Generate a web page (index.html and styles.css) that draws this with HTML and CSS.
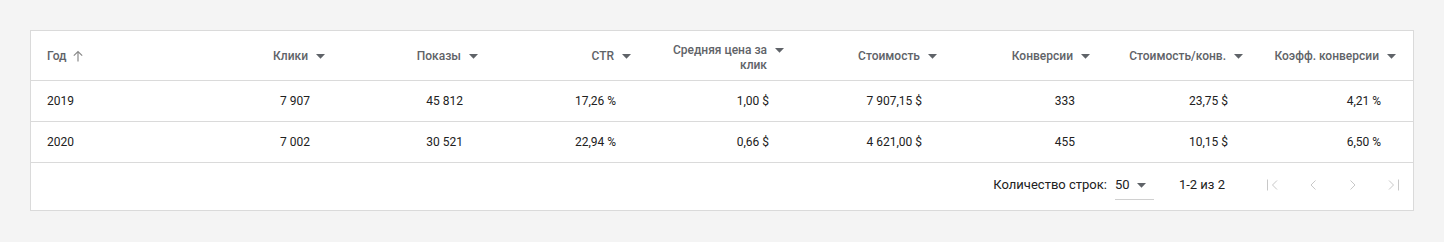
FILE: index.html
```html
<!DOCTYPE html>
<html lang="ru">
<head>
<meta charset="utf-8">
<link rel="stylesheet" href="styles.css">
</head>
<body>
<div class="card">
  <div class="grid">
    <div class="hcell first"><span class="htext">Год</span><svg class="up" width="12" height="12" viewBox="0 0 12 12"><path d="M6 11.5V1.5M1.8 5.7L6 1.5l4.2 4.2" fill="none" stroke="currentColor" stroke-width="1.2"/></svg></div>
    <div class="hcell"><span class="htext">Клики</span><svg class="dd" width="9" height="5" viewBox="0 0 9 5"><path d="M0 0h9L4.5 4.7z" fill="currentColor"/></svg></div>
    <div class="hcell"><span class="htext">Показы</span><svg class="dd" width="9" height="5" viewBox="0 0 9 5"><path d="M0 0h9L4.5 4.7z" fill="currentColor"/></svg></div>
    <div class="hcell"><span class="htext">CTR</span><svg class="dd" width="9" height="5" viewBox="0 0 9 5"><path d="M0 0h9L4.5 4.7z" fill="currentColor"/></svg></div>
    <div class="hcell two"><span class="htext">Средняя цена за клик</span><svg class="dd" width="9" height="5" viewBox="0 0 9 5"><path d="M0 0h9L4.5 4.7z" fill="currentColor"/></svg></div>
    <div class="hcell"><span class="htext">Стоимость</span><svg class="dd" width="9" height="5" viewBox="0 0 9 5"><path d="M0 0h9L4.5 4.7z" fill="currentColor"/></svg></div>
    <div class="hcell"><span class="htext">Конверсии</span><svg class="dd" width="9" height="5" viewBox="0 0 9 5"><path d="M0 0h9L4.5 4.7z" fill="currentColor"/></svg></div>
    <div class="hcell"><span class="htext">Стоимость/конв.</span><svg class="dd" width="9" height="5" viewBox="0 0 9 5"><path d="M0 0h9L4.5 4.7z" fill="currentColor"/></svg></div>
    <div class="hcell"><span class="htext">Коэфф. конверсии</span><svg class="dd" width="9" height="5" viewBox="0 0 9 5"><path d="M0 0h9L4.5 4.7z" fill="currentColor"/></svg></div>

    <div class="cell first">2019</div>
    <div class="cell">7 907</div>
    <div class="cell">45 812</div>
    <div class="cell">17,26 %</div>
    <div class="cell">1,00 $</div>
    <div class="cell">7 907,15 $</div>
    <div class="cell">333</div>
    <div class="cell">23,75 $</div>
    <div class="cell">4,21 %</div>

    <div class="cell first">2020</div>
    <div class="cell">7 002</div>
    <div class="cell">30 521</div>
    <div class="cell">22,94 %</div>
    <div class="cell">0,66 $</div>
    <div class="cell">4 621,00 $</div>
    <div class="cell">455</div>
    <div class="cell">10,15 $</div>
    <div class="cell">6,50 %</div>
  </div>
  <div class="paginator">
    <span class="label">Количество строк:</span>
    <div class="select"><span>50</span><svg class="dd" width="9" height="5" viewBox="0 0 9 5"><path d="M0 0h9L4.5 4.7z" fill="currentColor"/></svg></div>
    <span class="range">1-2 из 2</span>
    <div class="navs">
      <span class="nav"><svg width="14" height="14" viewBox="0 0 14 14"><path d="M1.5 1.5v11M11 2.5L6.5 7l4.5 4.5" fill="none" stroke="currentColor" stroke-width="1"/></svg></span>
      <span class="nav"><svg width="14" height="14" viewBox="0 0 14 14"><path d="M9.5 2.5L5 7l4.5 4.5" fill="none" stroke="currentColor" stroke-width="1"/></svg></span>
      <span class="nav"><svg width="14" height="14" viewBox="0 0 14 14"><path d="M4.5 2.5L9 7l-4.5 4.5" fill="none" stroke="currentColor" stroke-width="1"/></svg></span>
      <span class="nav"><svg width="14" height="14" viewBox="0 0 14 14"><path d="M12.5 1.5v11M3 2.5L7.5 7 3 11.5" fill="none" stroke="currentColor" stroke-width="1"/></svg></span>
    </div>
  </div>
</div>
</body>
</html>
```

FILE: styles.css
```css
html, body {
  margin: 0;
  padding: 0;
  background: #f4f4f4;
}
body {
  padding: 30px;
  font-family: Roboto, "Liberation Sans", Arial, sans-serif;
}
.card {
  background: #fff;
  border: 1px solid #dadada;
}
.grid {
  display: grid;
  grid-template-columns: 158px repeat(8, 153px);
  grid-template-rows: 50px 41px 41px;
}
.hcell {
  display: flex;
  justify-content: flex-end;
  align-items: center;
  padding: 2px 16px 0 8px;
  border-bottom: 1px solid #dadada;
  font-size: 12px;
  font-weight: 500;
  color: #5f6368;
  line-height: 15px;
  text-align: right;
}
.hcell.first {
  justify-content: flex-start;
  padding-left: 16px;
}
.hcell .htext {
  max-width: 112px;
}
.dd {
  flex: none;
  margin-left: 8px;
  margin-right: 1px;
  color: #5f6368;
  align-self: center;
}
.hcell.two {
  align-items: flex-start;
  padding-top: 12px;
}
.hcell.two .dd {
  align-self: flex-start;
  margin-top: 5px;
}
.up {
  margin-left: 6px;
  color: #8a8a8a;
  margin-top: -1px;
}
.cell {
  display: flex;
  align-items: center;
  justify-content: flex-end;
  padding: 0 32px 0 16px;
  border-bottom: 1px solid #dadada;
  font-size: 12px;
  color: #212121;
}
.cell.first {
  justify-content: flex-start;
  padding-left: 16px;
}
.paginator {
  height: 47px;
  box-sizing: border-box;
  padding-bottom: 4px;
  display: flex;
  align-items: center;
  justify-content: flex-end;
  font-size: 13px;
  color: #212121;
}
.label {
  margin-right: 8px;
}
.select {
  width: 39px;
  height: 30px;
  box-sizing: border-box;
  display: flex;
  align-items: center;
  border-bottom: 1px solid #d0d0d0;
  margin-top: 0;
}
.select .dd {
  margin-left: 7px;
  margin-top: 2px;
}
.range {
  margin-left: 25px;
  margin-right: 28px;
}
.navs {
  display: flex;
}
.nav {
  width: 40px;
  height: 40px;
  display: flex;
  align-items: center;
  justify-content: center;
  color: #c8c8c8;
}
```
